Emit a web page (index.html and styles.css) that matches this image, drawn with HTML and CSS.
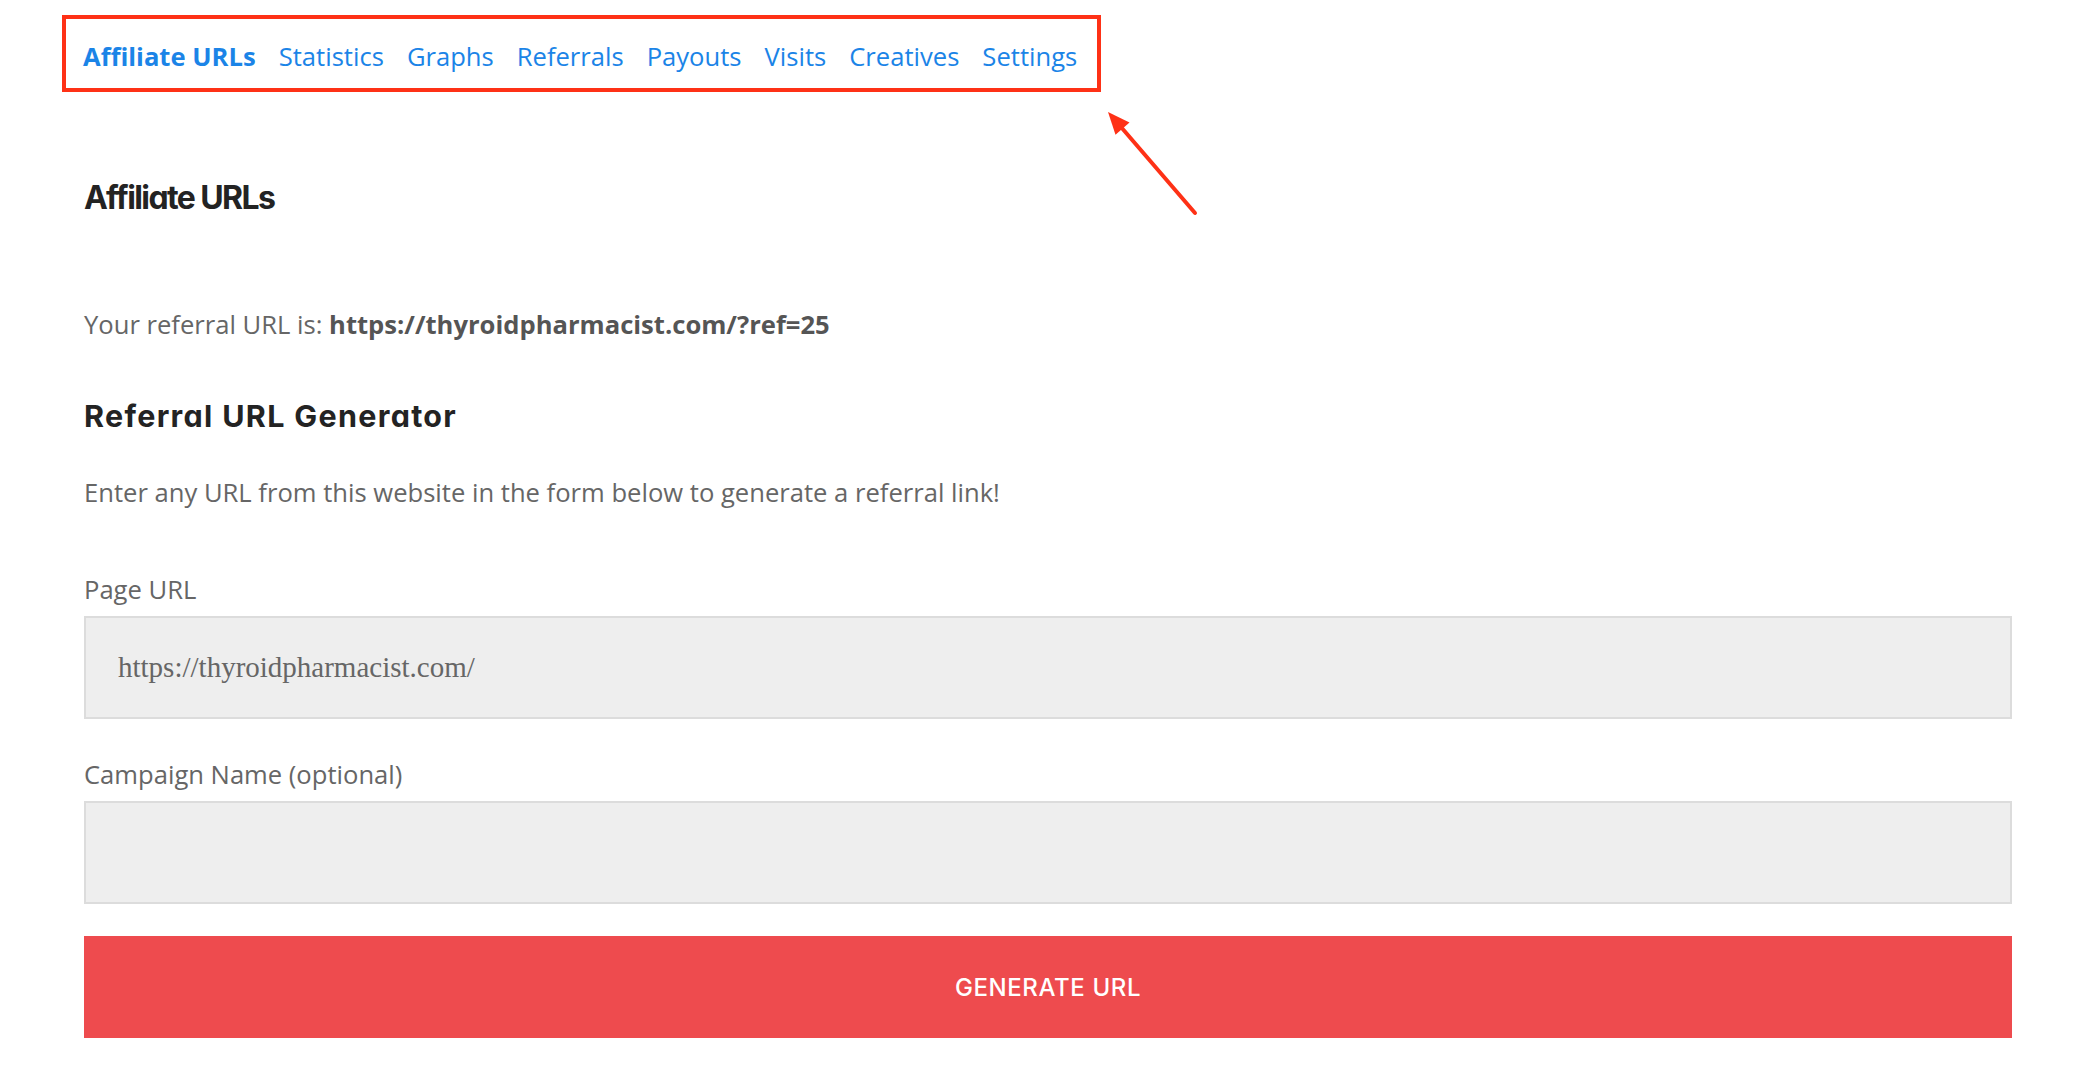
FILE: index.html
```html
<!DOCTYPE html>
<html lang="en">
<head>
<meta charset="utf-8">
<title>Affiliate URLs</title>
<link rel="stylesheet" href="styles.css">
</head>
<body>
<div class="page">
  <nav class="tabs">
    <a class="tab active" href="#">Affiliate URLs</a>
    <a class="tab" href="#">Statistics</a>
    <a class="tab" href="#">Graphs</a>
    <a class="tab" href="#">Referrals</a>
    <a class="tab" href="#">Payouts</a>
    <a class="tab" href="#">Visits</a>
    <a class="tab" href="#">Creatives</a>
    <a class="tab" href="#">Settings</a>
  </nav>

  <h1 class="title">Affiliate URLs</h1>

  <p class="text ref-line">Your referral URL is: <strong>https://thyroidpharmacist.com/?ref=25</strong></p>

  <h2 class="subtitle">Referral URL Generator</h2>

  <p class="text intro">Enter any URL from this website in the form below to generate a referral link!</p>

  <form class="form">
    <div class="field">
      <label class="label" for="page-url">Page URL</label>
      <input class="input" id="page-url" type="text" value="https://thyroidpharmacist.com/">
    </div>
    <div class="field">
      <label class="label" for="campaign">Campaign Name (optional)</label>
      <input class="input" id="campaign" type="text" value="">
    </div>
    <button class="button" type="button">GENERATE URL</button>
  </form>

  <svg class="arrow" viewBox="1100 105 100 115" width="100" height="115" aria-hidden="true">
    <line x1="1195" y1="213" x2="1121" y2="127" stroke="#fe3116" stroke-width="4" stroke-linecap="round"/>
    <polygon points="1108,112 1129.5,122.5 1115.5,134.8" fill="#fe3116"/>
  </svg>
</div>
</body>
</html>
```

FILE: styles.css
```css
* {
  box-sizing: border-box;
}

html, body {
  margin: 0;
  padding: 0;
  background: #ffffff;
}

body {
  font-family: "Open Sans", "Liberation Sans", sans-serif;
  color: #666666;
}

.page {
  position: relative;
  width: 1928px;
  margin-left: 84px;
  padding-top: 15px;
}

.tabs {
  display: inline-flex;
  align-items: center;
  gap: 23px;
  margin-left: -22px;
  border: 4px solid #fe3116;
  padding: 21px 20px 14px 17px;
}

.tab {
  font-size: 25.6px;
  line-height: 34px;
  color: #1b84e7;
  text-decoration: none;
}

.tab.active {
  font-weight: 700;
}

.title {
  margin: 86px 0 0;
  font-family: Inter, "Liberation Sans", sans-serif;
  font-feature-settings: "cv11" 1;
  font-weight: 700;
  font-size: 32px;
  line-height: 40px;
  letter-spacing: -1.6px;
  color: #232323;
}

.text {
  margin: 0;
  font-size: 25.6px;
  line-height: 34px;
  color: #666666;
}

.text strong {
  font-weight: 700;
  color: #555555;
}

.ref-line {
  margin-top: 90px;
}

.subtitle {
  margin: 55px 0 0;
  font-family: Inter, "Liberation Sans", sans-serif;
  font-feature-settings: "cv11" 1;
  font-weight: 700;
  font-size: 30.5px;
  line-height: 38px;
  letter-spacing: 1.3px;
  color: #232323;
}

.intro {
  margin-top: 41px;
}

.form {
  margin-top: 63px;
  display: flex;
  flex-direction: column;
}

.field {
  display: flex;
  flex-direction: column;
  gap: 9px;
  margin-bottom: 39px;
}

.field:nth-child(2) {
  margin-bottom: 32px;
}

.label {
  font-size: 25.6px;
  line-height: 34px;
  color: #666666;
}

.input {
  display: block;
  width: 100%;
  height: 103px;
  margin: 0;
  padding: 0 32px;
  border: 2px solid #dcdcdc;
  border-radius: 0;
  background: #eeeeee;
  font-family: "Liberation Serif", "Times New Roman", serif;
  font-size: 29px;
  color: #666666;
  outline: none;
}

.button {
  display: block;
  width: 100%;
  height: 102px;
  margin: 0;
  border: 0;
  border-radius: 0;
  background: #ee4b4e;
  color: #ffffff;
  font-family: Inter, "Liberation Sans", sans-serif;
  font-weight: 500;
  font-size: 24px;
  letter-spacing: 0.6px;
  cursor: pointer;
}

.arrow {
  position: absolute;
  left: 1016px;
  top: 105px;
  overflow: visible;
}
```
